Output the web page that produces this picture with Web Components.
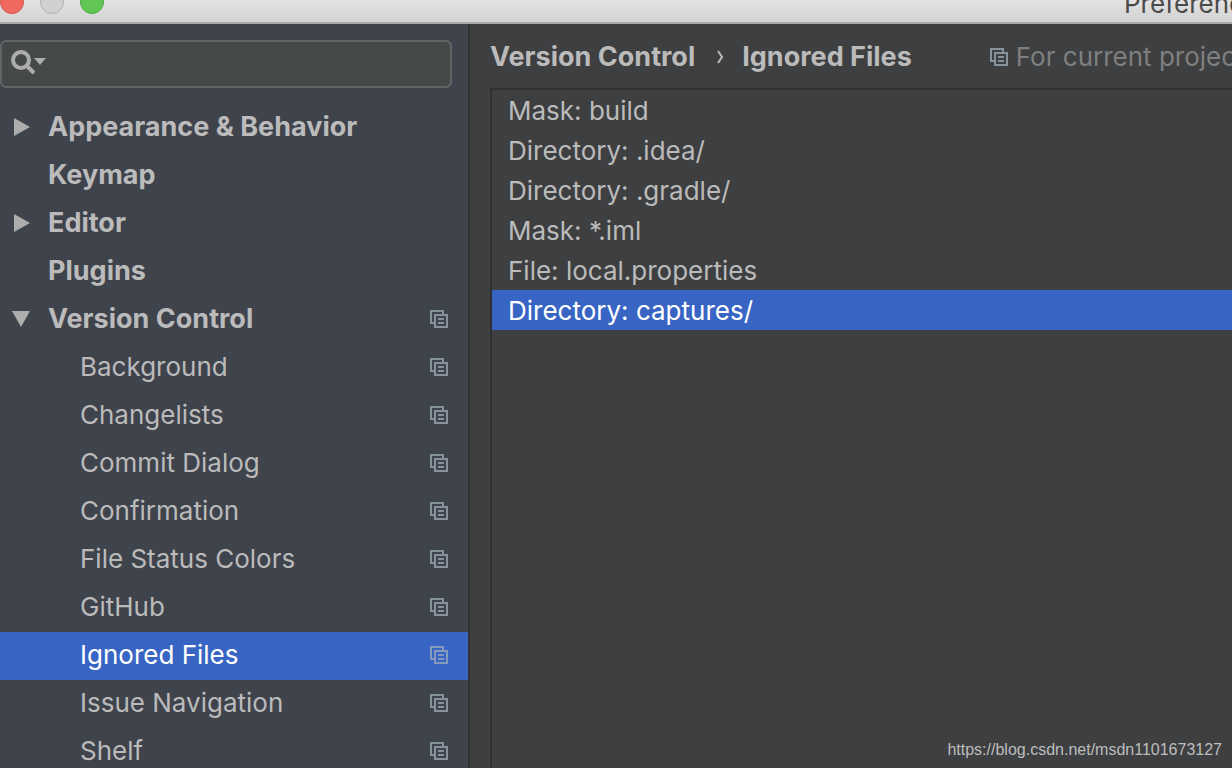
<!DOCTYPE html>
<html lang="en">
<head>
<meta charset="utf-8">
<title>Preferences</title>
<style>
  html, body { margin: 0; height: 100%; }
  body { overflow: hidden; background: #3e3f41; color: #bbbbbb; font: 26px/40px Inter, "Liberation Sans", sans-serif; }
</style>
</head>
<body>
<preferences-window></preferences-window>
<script>
class ScopeIcon extends HTMLElement {
  constructor() {
    super();
    this.attachShadow({ mode: 'open' }).innerHTML = `
      <style>:host { display: block; flex: none; width: 18px; height: 18px; color: #87939a; } svg { display: block; }</style>
      <svg width="18" height="18" viewBox="0 0 18 18" fill="currentColor" aria-hidden="true">
        <path d="M0 0H14V4H12V2H2V12H4V14H0Z"/>
        <path fill-rule="evenodd" d="M4 4H18V18H4ZM6 6V16H16V6Z"/>
        <path d="M8 8H14V10H8ZM8 12H14V14H8Z"/>
      </svg>`;
  }
}
customElements.define('scope-icon', ScopeIcon);

class TitleBar extends HTMLElement {
  constructor() {
    super();
    this.attachShadow({ mode: 'open' }).innerHTML = `
      <style>
        :host { display: flex; align-items: flex-end; flex: none; height: 24px; box-sizing: border-box; overflow: hidden;
          padding-bottom: 8px; border-bottom: 2px solid #a9a9a9; background: linear-gradient(#e2e2e2, #d2d2d2); }
        button { flex: none; width: 24px; height: 24px; margin: 0 16px 0 0; padding: 0; border: 1px solid; border-radius: 50%; }
        .close { background: #ee6a5f; border-color: #d8534a; }
        .min { background: #d0d0d0; border-color: #b2b2b2; }
        .zoom { background: #62c655; border-color: #4aab3f; }
        h1 { margin: 0 0 -6px 1004px; font-size: 26px; font-weight: 400; line-height: 32px; color: #4a4a4a; white-space: nowrap; }
      </style>
      <button class="close" aria-label="Close"></button>
      <button class="min" aria-label="Minimize"></button>
      <button class="zoom" aria-label="Zoom"></button>
      <h1><slot></slot></h1>`;
  }
}
customElements.define('title-bar', TitleBar);

class SearchField extends HTMLElement {
  constructor() {
    super();
    this.attachShadow({ mode: 'open' }).innerHTML = `
      <style>
        :host { display: block; }
        label { display: flex; align-items: center; height: 48px; box-sizing: border-box; padding: 0 8px;
          border: 2px solid #646464; border-radius: 6px; background: #45494a; }
        svg { flex: none; display: block; }
        input { flex: 1; min-width: 0; margin: 0; border: 0; padding: 0 8px; outline: 0; background: none; color: inherit; font: inherit; line-height: 32px; }
      </style>
      <label>
        <svg width="36" height="28" viewBox="0 0 36 28" aria-hidden="true">
          <circle cx="11" cy="10" r="8" fill="none" stroke="#adadad" stroke-width="4"/>
          <path d="M17 16L24 23" stroke="#adadad" stroke-width="4"/>
          <path d="M24 8H36L30 15Z" fill="#adadad"/>
        </svg>
        <input type="text" aria-label="Search settings">
      </label>`;
  }
}
customElements.define('search-field', SearchField);

class TreeItem extends HTMLElement {
  constructor() {
    super();
    this.attachShadow({ mode: 'open' }).innerHTML = `
      <style>
        :host { display: flex; align-items: center; height: 48px; box-sizing: border-box; padding: 0 20px 2px 12px; }
        :host([group]) { font-weight: 700; font-size: 27px; }
        :host([selected]) { background: #3865c4; color: #ffffff; }
        .arrow { flex: none; width: 36px; }
        :host(:not([group])) .arrow { width: 68px; }
        svg { display: block; }
        .name { flex: 1; white-space: nowrap; line-height: 46px; }
        :host([selected]) scope-icon { color: #869bbc; }
      </style>
      <span class="arrow"></span><span class="name"><slot></slot></span>`;
  }
  connectedCallback() {
    this.setAttribute('role', 'treeitem');
    const state = this.getAttribute('state');
    if (state) this.shadowRoot.querySelector('.arrow').innerHTML =
      `<svg width="18" height="18" viewBox="0 0 18 18" fill="#adadad" aria-hidden="true"><path d="${state === 'open' ? 'M0 1H18L9 17Z' : 'M2 0L18 9L2 18Z'}"/></svg>`;
    if (this.hasAttribute('scoped')) this.shadowRoot.append(document.createElement('scope-icon'));
  }
}
customElements.define('tree-item', TreeItem);

class SettingsSidebar extends HTMLElement {
  constructor() {
    super();
    this.attachShadow({ mode: 'open' }).innerHTML = `
      <style>
        :host { display: block; flex: none; width: 468px; padding-top: 16px; box-sizing: content-box; border-right: 2px solid #323232; background: #3f434c; overflow: hidden; }
        search-field { margin: 0 16px 16px 0; }
      </style>
      <search-field></search-field>
      <div role="tree">
        <tree-item group state="closed">Appearance &amp; Behavior</tree-item>
        <tree-item group>Keymap</tree-item>
        <tree-item group state="closed">Editor</tree-item>
        <tree-item group>Plugins</tree-item>
        <tree-item group state="open" scoped>Version Control</tree-item>
        <tree-item scoped>Background</tree-item>
        <tree-item scoped>Changelists</tree-item>
        <tree-item scoped>Commit Dialog</tree-item>
        <tree-item scoped>Confirmation</tree-item>
        <tree-item scoped>File Status Colors</tree-item>
        <tree-item scoped>GitHub</tree-item>
        <tree-item scoped selected>Ignored Files</tree-item>
        <tree-item scoped>Issue Navigation</tree-item>
        <tree-item scoped>Shelf</tree-item>
      </div>`;
  }
}
customElements.define('settings-sidebar', SettingsSidebar);

class IgnoredPanel extends HTMLElement {
  constructor() {
    super();
    this.attachShadow({ mode: 'open' }).innerHTML = `
      <style>
        :host { display: flex; flex-direction: column; flex: 1; min-width: 0; padding-left: 20px; overflow: hidden; }
        header { display: flex; align-items: center; flex: none; height: 64px; padding-top: 2px; box-sizing: border-box; white-space: nowrap; }
        nav { display: flex; align-items: center; font-size: 27px; font-weight: 700; }
        nav svg { margin: 0 18px 0 22px; }
        .scope { display: flex; align-items: center; gap: 8px; margin-left: 78px; color: #7f7f7f; }
        ul { flex: 1; margin: 0; padding: 0; list-style: none; border: solid #2f3032; border-width: 2px 0 0 2px; }
        li { height: 40px; line-height: 42px; padding-left: 16px; white-space: nowrap; }
        li[aria-selected=true] { background: #3865c4; color: #ffffff; }
      </style>
      <header>
        <nav aria-label="Breadcrumb"><span>Version Control</span>
          <svg width="7" height="14" viewBox="0 0 7 14" fill="none" stroke="#bbbbbb" stroke-width="2" aria-hidden="true"><path d="M1 1L5 7L1 13"/></svg>
          <span>Ignored Files</span></nav>
        <div class="scope"><scope-icon></scope-icon><span>For current project</span></div>
      </header>
      <ul role="listbox" aria-label="Ignored files">
        <li role="option">Mask: build</li>
        <li role="option">Directory: .idea/</li>
        <li role="option">Directory: .gradle/</li>
        <li role="option">Mask: *.iml</li>
        <li role="option">File: local.properties</li>
        <li role="option" aria-selected="true">Directory: captures/</li>
      </ul>`;
  }
}
customElements.define('ignored-panel', IgnoredPanel);

class PreferencesWindow extends HTMLElement {
  constructor() {
    super();
    this.attachShadow({ mode: 'open' }).innerHTML = `
      <style>
        :host { display: flex; flex-direction: column; height: 100vh; }
        .body { display: flex; flex: 1; min-height: 0; }
        .mark { position: absolute; right: 10px; bottom: 8px; font: 16px/20px "Liberation Sans", Arial, sans-serif; color: #bdbdbd; }
      </style>
      <title-bar>Preferences</title-bar>
      <div class="body"><settings-sidebar></settings-sidebar><ignored-panel></ignored-panel></div>
      <span class="mark">https://blog.csdn.net/msdn1101673127</span>`;
  }
}
customElements.define('preferences-window', PreferencesWindow);
</script>
</body>
</html>
